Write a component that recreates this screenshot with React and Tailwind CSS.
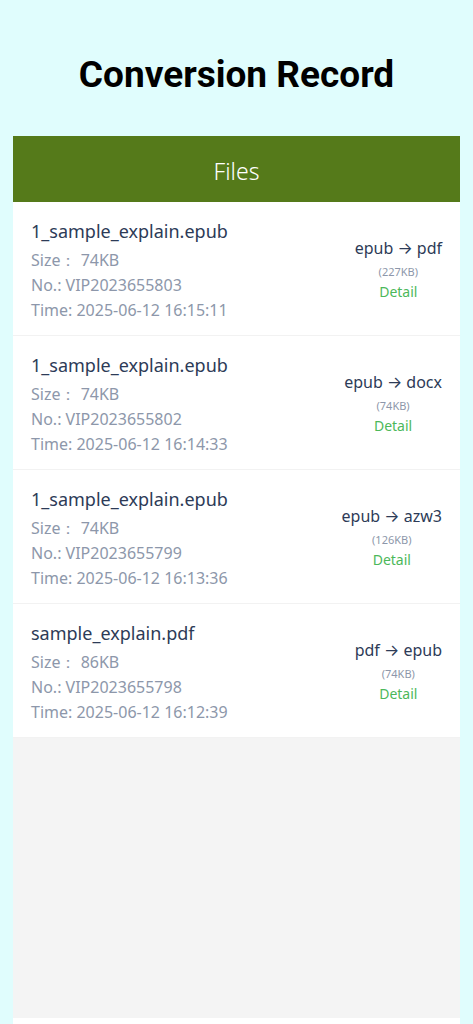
import React from 'react';

const records = [
    { name: '1_sample_explain.epub', size: '74KB', no: 'VIP2023655803', time: '2025-06-12 16:15:11', from: 'epub', to: 'pdf', out: '227KB' },
    { name: '1_sample_explain.epub', size: '74KB', no: 'VIP2023655802', time: '2025-06-12 16:14:33', from: 'epub', to: 'docx', out: '74KB' },
    { name: '1_sample_explain.epub', size: '74KB', no: 'VIP2023655799', time: '2025-06-12 16:13:36', from: 'epub', to: 'azw3', out: '126KB' },
    { name: 'sample_explain.pdf', size: '86KB', no: 'VIP2023655798', time: '2025-06-12 16:12:39', from: 'pdf', to: 'epub', out: '74KB' },
];

const RecordItem = ({ el }) => (
    <div className="h-[134px] flex justify-between border-b border-[#f2f2f2] bg-white pl-[18px] pr-[18px] pt-[16px]">
        <div className="flex flex-col">
            <span className="text-[18px] leading-[26px] text-[#2d3b57]">{el.name}</span>
            <span className="text-[16px] leading-[26px] mt-[3px] text-[#8d97aa]">Size： {el.size}</span>
            <span className="text-[16px] leading-[25px] text-[#8d97aa]">No.: {el.no}</span>
            <span className="text-[16px] leading-[25px] text-[#8d97aa]">Time: {el.time}</span>
        </div>
        <div className="flex flex-col items-center pt-[18px]">
            <span className="text-[16px] leading-[24px] text-[#2d3b57]">
                {el.from} → {el.to}
            </span>
            <span className="text-[11px] leading-[16px] mt-[4px] text-[#8d97aa]">({el.out})</span>
            <span className="text-[14px] leading-[20px] mt-[2px] text-[#4cb85a]">Detail</span>
        </div>
    </div>
);

export default function App() {
    return (
        <div
            className="min-h-[1024px] bg-[#e0fdfd] flex flex-col"
            style={{ fontFamily: '"Noto Sans", Inter, sans-serif' }}
        >
            <h1
                className="h-[136px] flex items-center justify-center pt-[14px] text-[37px] font-bold text-black"
                style={{ fontFamily: 'Roboto, "Liberation Sans", sans-serif' }}
            >
                Conversion Record
            </h1>
            <div className="mx-[13px] flex flex-col">
                <div className="h-[66px] bg-[#557a1a] flex items-center justify-center pt-[4px] text-[23px] font-light text-white">Files</div>
                {records.map((el) => (
                    <RecordItem el={el} key={el.no} />
                ))}
                <div className="h-[280px] bg-[#f4f4f4]" />
                <div className="h-[6px] bg-white" />
            </div>
        </div>
    );
}
